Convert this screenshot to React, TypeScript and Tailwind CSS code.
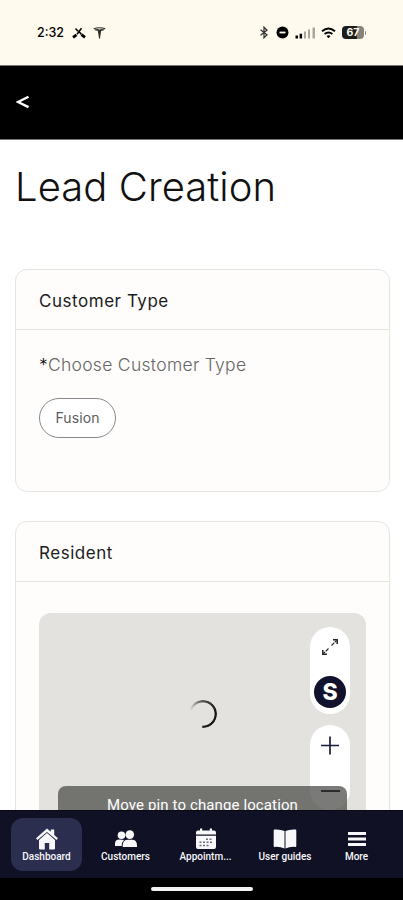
import type { ReactNode } from 'react'

const StatusBar = () => (
  <div className="h-[65px] shrink-0 bg-[#fffaed] flex items-center justify-between pl-[37px] pr-[37px] text-black">
    <div className="flex items-center">
      <span className="w-[35px] text-[12.5px] leading-4 font-medium">2:32</span>
      <svg width="14" height="12" viewBox="0 0 14 12" fill="none" stroke="currentColor">
        <path d="M3.5 1.5 6 4.2M9.5 1.2 7 4.5" strokeWidth="1.5" />
        <path d="M7.5 4 5 7.2M7 4.5l2.5 3" strokeWidth="1.5" />
        <path d="M1 10.3 4.500 7.800M9.500 7.600l3.500 2.700" strokeWidth="2.8" />
      </svg>
      <svg className="ml-[7px]" width="13" height="12" viewBox="0 0 13 12" fill="#2b2b28">
        <path d="M.5 1.2Q6.500-.8 12.500 1.200L12 2.200Q6.500.5 1 2.200Z" />
        <path d="M1.300 2.500Q3 2 5 2l1.500.8L8 2q2 0 3.700.500-.7 1.200-3.500 1.200L6.900 11.800h-.8L4.800 3.700Q2 3.700 1.300 2.500Z" />
      </svg>
    </div>
    <div className="flex items-center">
      <svg width="10" height="13" viewBox="0 0 10 13" fill="none" stroke="#333" strokeWidth="1.3">
        <path d="m1.500 3.700 6.500 5-3 3V1.300l3 3-6.500 5" />
      </svg>
      <svg className="ml-[7px]" width="13" height="13" viewBox="0 0 13 13">
        <circle cx="6.5" cy="6.5" r="6" />
        <path d="M3.5 6.5h6" stroke="#fffaed" strokeWidth="1.8" />
      </svg>
      <svg className="ml-[6px]" width="21" height="12" viewBox="0 0 21 12">
        <path d="M.5 8.500h2.500v3H.5zM4.600 6.800h2.500v4.700H4.600z" />
        <path fill="#aaa79e" d="M9 4.500h2v7H9zM13 2.500h2v9h-2zM17.500.5h2.500v11h-2.500z" />
      </svg>
      <svg className="ml-[5px]" width="15" height="12" viewBox="0 0 15 12" fill="none" stroke="currentColor" strokeWidth="1.9">
        <path d="M1 4.200q6.500-5.600 13 0M3.600 7q3.900-3.200 7.800 0" />
        <path d="m5.500 8.900 2 2.300 2-2.300q-2-1.500-4 0Z" fill="currentColor" stroke="none" />
      </svg>
      <div className="ml-[6px] flex items-center">
        <div className="h-[13px] w-[22px] rounded-[4px] bg-linear-to-r from-[#1c1c1b] from-65% to-[#85827b] to-70% text-[10.5px] leading-[13px] font-bold text-[#fffaed] text-center">
          67
        </div>
        <div className="ml-px h-1 w-px bg-[#85827b] rounded-r" />
      </div>
    </div>
  </div>
)

const Card = ({ title, className, children }: { title: string; className: string; children: ReactNode }) => (
  <section className={`mx-[15px] w-[375px] shrink-0 rounded-xl border border-[#e5e4e0] bg-[#fefdfb] ${className}`}>
    <h2 className="h-[60px] border-b border-[#e5e4e0] pl-[23px] pt-1 flex items-center text-[17px] tracking-[0.54px] text-[#1c1c1c]">
      {title}
    </h2>
    {children}
  </section>
)

const MapPreview = () => (
  <div className="relative mx-[23px] mt-[31px] h-[260px] w-[327px] rounded-xl bg-[#e3e2de]">
    <div className="absolute left-[150px] top-[87px] size-[28px] rounded-full bg-[conic-gradient(from_-75deg,transparent_0deg,#b8b7b4_25deg,#555_70deg,#111_160deg,#222_255deg,transparent_262deg)] mask-[radial-gradient(circle,transparent_11.2px,black_12px)]" />
    <div className="absolute left-[271px] top-[14px] h-[87px] w-10 rounded-full bg-white flex flex-col items-center">
      <svg className="mt-[11px]" width="18" height="18" viewBox="0 0 18 18" fill="none" stroke="#252525" strokeWidth="1.5">
        <path d="m10.500 7.500 5-5M7.500 10.500l-5 5" strokeWidth="1.2" strokeDasharray="4 .8" />
        <path d="M12 1.800h4.200V6M1.800 12v4.200H6" />
      </svg>
      <div className="mt-[20px] size-8 shrink-0 rounded-full bg-[#11122d] text-white flex items-center justify-center text-[23px] leading-none font-[Inter] font-extrabold">
        S
      </div>
    </div>
    <div className="absolute left-[271px] top-[112px] h-[85px] w-10 rounded-full bg-white flex flex-col items-center">
      <svg className="mt-[11px]" width="18" height="19" viewBox="0 0 18 19" stroke="#1b1b3c" strokeWidth="1.7">
        <path d="M9 .5v18M0 9.500h18" />
      </svg>
      <div className="mt-[35px] h-[2px] w-[19px] shrink-0 bg-[#171721]" />
    </div>
    <div className="absolute left-[19px] top-[173px] h-[40px] w-[289px] rounded-lg bg-[#4d4d4b]/75 pt-[9px] text-center font-[Roboto] text-[15px] leading-5 tracking-[0.12px] text-white">
      Move pin to change location
    </div>
    <div className="absolute left-[282px] top-[177px] h-[2px] w-[19px] bg-[#2b2b2d]" />
  </div>
)

const HomeIcon = () => (
  <svg width="24" height="22" viewBox="0 0 24 22" fill="currentColor">
    <path d="M12 5 4 11.900V20.500q0 1 1 1h4.800V15h4.400v6.500H19q1 0 1-1v-8.600Z" />
    <path d="M12 .5 1 10.300l1.400 1.600L12 3.900l9.600 8 1.400-1.600-3.800-3.400V1.500h-3.400v2.300Z" />
  </svg>
)

const PeopleIcon = () => (
  <svg width="24" height="18" viewBox="0 0 24 18" fill="currentColor">
    <circle cx="7.500" cy="5.200" r="3.800" />
    <path d="M1 16v-2.500q0-4 4.500-4 3 0 4.500.5-2.300 2-2.300 6Z" />
    <circle cx="15.800" cy="4.600" r="4.300" />
    <path d="M8.700 17v-1.500q0-5.700 5.300-5.700h4q5 0 5 5.700V17Z" />
  </svg>
)

const CalendarIcon = () => (
  <svg width="22" height="22" viewBox="0 0 22 22">
    <path fill="currentColor" d="M5 .5h2.200v2h7.600v-2H17v2h2q2 0 2 2v2H1v-2q0-2 2-2h2ZM1 7.700h20V19q0 2-2 2H3q-2 0-2-2Z" />
    <path stroke="#6b6c7c" strokeWidth="1.5" strokeDasharray="2 1.5" d="M11 11.200h6.500M4.500 14.300h13M4.500 17.400h9" />
  </svg>
)

const BookIcon = () => (
  <svg width="24" height="20" viewBox="0 0 24 20" fill="currentColor">
    <path d="M11.500 2Q7 0 1.500.500q-.8.100-.8 1V17q0 1 1 .9 5.600-.4 9.800 1.600ZM12.500 2Q17 0 22.500.500q.8.100.8 1V17q0 1-1 .9-5.600-.4-9.800 1.600Z" />
  </svg>
)

const MenuIcon = () => (
  <svg width="18" height="14" viewBox="0 0 18 14" stroke="currentColor" strokeWidth="2.8">
    <path d="M0 1.500h18M0 7h18M0 12.500h18" />
  </svg>
)

const items = [
  { label: 'Dashboard', icon: <HomeIcon />, width: 'w-[71px] bg-[#2c2e50]' },
  { label: 'Customers', icon: <PeopleIcon />, width: 'w-[87px]' },
  { label: 'Appointm...', icon: <CalendarIcon />, width: 'w-[73px]' },
  { label: 'User guides', icon: <BookIcon />, width: 'w-[86px]' },
  { label: 'More', icon: <MenuIcon />, width: 'w-[57px]' },
]

const BottomNav = () => (
  <nav className="h-[68px] shrink-0 bg-[#101124] border-t border-[#070913] pl-[11px] pt-[7px] flex text-[#f8f8fa]">
    {items.map(({ label, icon, width }) => (
      <div key={label} className={`h-[53px] rounded-xl flex flex-col items-center ${width}`}>
        <div className="mt-[9px] h-[23px] flex items-center justify-center">{icon}</div>
        <span className="font-[Roboto] text-[10px] leading-[13px] font-medium whitespace-nowrap">{label}</span>
      </div>
    ))}
  </nav>
)

const App = () => {
  return (
    <div className="h-[900px] w-[403px] overflow-hidden bg-white flex flex-col font-[Inter,sans-serif]">
      <StatusBar />
      <header className="h-[75px] shrink-0 border-y border-[#77756f] bg-black pl-[16px] pb-[2px] flex items-center">
        <svg width="14" height="14" viewBox="0 0 14 14" fill="none" stroke="white" strokeWidth="2.4">
          <path d="M12.500 1.700 2 7l10.500 5.200" />
        </svg>
      </header>
      <main className="h-[670px] shrink-0 overflow-hidden flex flex-col">
        <h1 className="ml-[15px] mt-[22px] h-[50px] text-[40px] leading-[50px] font-light tracking-[0.05px] text-[#111] whitespace-nowrap">
          Lead Creation
        </h1>
        <Card title="Customer Type" className="mt-[57px] h-[223px]">
          <p className="ml-[23px] mt-[23px] text-[17.5px] leading-6 font-light tracking-[0.3px] text-[#666]">
            <span className="text-black">*</span>Choose Customer Type
          </p>
          <button className="ml-[23px] mt-[21px] h-10 w-[77px] rounded-full border border-[#88898d] bg-white pb-px text-[14px] tracking-[0.1px] text-[#5c5c60]">
            Fusion
          </button>
        </Card>
        <Card title="Resident" className="mt-[29px] h-[360px]">
          <MapPreview />
        </Card>
      </main>
      <BottomNav />
      <div className="h-[22px] shrink-0 bg-black flex justify-center pt-[9px]">
        <div className="h-[4px] w-[102px] rounded-full bg-[#f2f2f2]" />
      </div>
    </div>
  )
}

export default App
